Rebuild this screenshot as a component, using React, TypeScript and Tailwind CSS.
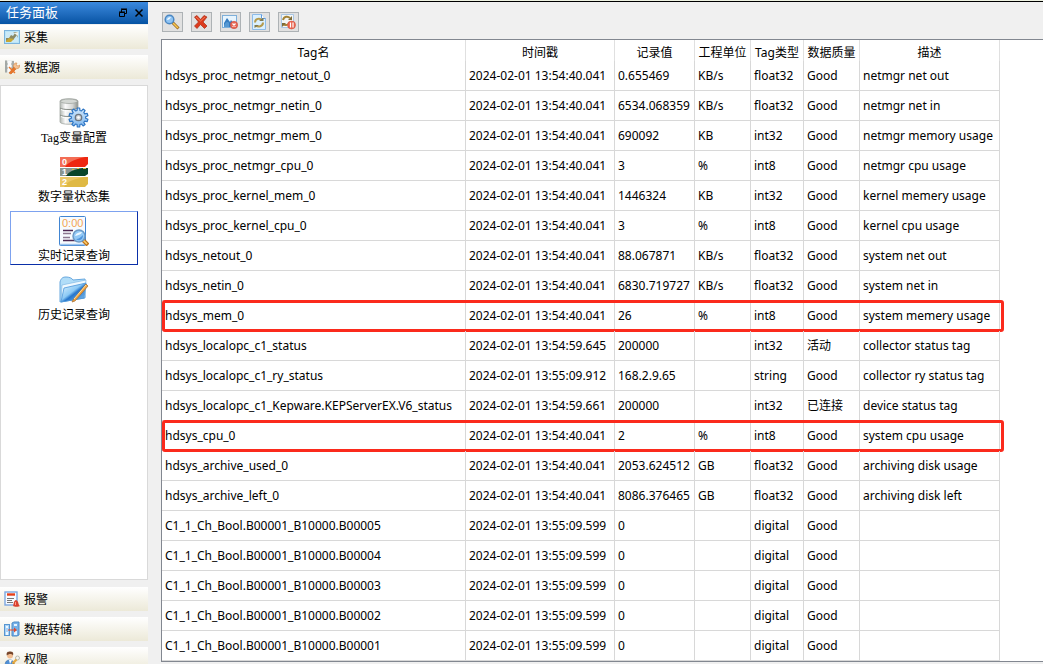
import type { ReactNode } from 'react';

type Row = [string, string, string, string, string, string, string];

const TIME = '2024-02-01 13:54:40.041';
const TIME_DIGITAL = '2024-02-01 13:55:09.599';

const rows: Row[] = [
  ['hdsys_proc_netmgr_netout_0', TIME, '0.655469', 'KB/s', 'float32', 'Good', 'netmgr net out'],
  ['hdsys_proc_netmgr_netin_0', TIME, '6534.068359', 'KB/s', 'float32', 'Good', 'netmgr net in'],
  ['hdsys_proc_netmgr_mem_0', TIME, '690092', 'KB', 'int32', 'Good', 'netmgr memory usage'],
  ['hdsys_proc_netmgr_cpu_0', TIME, '3', '%', 'int8', 'Good', 'netmgr cpu usage'],
  ['hdsys_proc_kernel_mem_0', TIME, '1446324', 'KB', 'int32', 'Good', 'kernel memery usage'],
  ['hdsys_proc_kernel_cpu_0', TIME, '3', '%', 'int8', 'Good', 'kernel cpu usage'],
  ['hdsys_netout_0', TIME, '88.067871', 'KB/s', 'float32', 'Good', 'system net out'],
  ['hdsys_netin_0', TIME, '6830.719727', 'KB/s', 'float32', 'Good', 'system net in'],
  ['hdsys_mem_0', TIME, '26', '%', 'int8', 'Good', 'system memery usage'],
  ['hdsys_localopc_c1_status', '2024-02-01 13:54:59.645', '200000', '', 'int32', '活动', 'collector status tag'],
  ['hdsys_localopc_c1_ry_status', '2024-02-01 13:55:09.912', '168.2.9.65', '', 'string', 'Good', 'collector ry status tag'],
  ['hdsys_localopc_c1_Kepware.KEPServerEX.V6_status', '2024-02-01 13:54:59.661', '200000', '', 'int32', '已连接', 'device status tag'],
  ['hdsys_cpu_0', TIME, '2', '%', 'int8', 'Good', 'system cpu usage'],
  ['hdsys_archive_used_0', TIME, '2053.624512', 'GB', 'float32', 'Good', 'archiving disk usage'],
  ['hdsys_archive_left_0', TIME, '8086.376465', 'GB', 'float32', 'Good', 'archiving disk left'],
  ['C1_1_Ch_Bool.B00001_B10000.B00005', TIME_DIGITAL, '0', '', 'digital', 'Good', ''],
  ['C1_1_Ch_Bool.B00001_B10000.B00004', TIME_DIGITAL, '0', '', 'digital', 'Good', ''],
  ['C1_1_Ch_Bool.B00001_B10000.B00003', TIME_DIGITAL, '0', '', 'digital', 'Good', ''],
  ['C1_1_Ch_Bool.B00001_B10000.B00002', TIME_DIGITAL, '0', '', 'digital', 'Good', ''],
  ['C1_1_Ch_Bool.B00001_B10000.B00001', TIME_DIGITAL, '0', '', 'digital', 'Good', ''],
];

const headers = ['Tag名', '时间戳', '记录值', '工程单位', 'Tag类型', '数据质量', '描述'];
const highlighted = new Set(['hdsys_mem_0', 'hdsys_cpu_0']);

function Icon16({ children }: { children: ReactNode }) {
  return (
    <svg width="16" height="16" viewBox="0 0 16 16" className="shrink-0" aria-hidden="true">
      {children}
    </svg>
  );
}

function Icon30({ children }: { children: ReactNode }) {
  return (
    <svg width="30" height="30" viewBox="0 0 30 30" className="shrink-0" aria-hidden="true">
      {children}
    </svg>
  );
}

// Outline of a gear: each tooth has two outer and two inner corners.
function gearPath(cx: number, cy: number, outer: number, inner: number, teeth: number) {
  const points: string[] = [];
  for (let tooth = 0; tooth < teeth; tooth++) {
    const corners: [number, number][] = [[-0.32, inner], [-0.2, outer], [0.2, outer], [0.32, inner]];
    for (const [shift, radius] of corners) {
      const angle = ((tooth + shift) * 2 * Math.PI) / teeth;
      points.push(`${(cx + radius * Math.sin(angle)).toFixed(2)} ${(cy - radius * Math.cos(angle)).toFixed(2)}`);
    }
  }
  return `M${points.join('L')}Z`;
}

const CollectIcon = () => (
  <Icon16>
    <rect x="0.5" y="1.5" width="15" height="13" fill="#b9e6fa" stroke="#7db4dc" />
    <rect x="2" y="3" width="12" height="10" fill="#cdeaf6" />
    <path d="M2 9h3l2-3 2 1 2-3-2-1h5v6l-1-3-4 5-3-1-2 2H2z" fill="#8b8a66" />
    <path d="M2 12l3-3 5 1-3 3H2z" fill="#c7a735" />
    <path d="M10 4l4-1v4z" fill="#f2f4ee" />
  </Icon16>
);

const SourceIcon = () => (
  <Icon16>
    <path d="M1 1.500h9v12H1z" fill="#e3e6e4" />
    <path d="M1 1.500h2v12H1z" fill="#a4a9a6" />
    <path d="M1 5h9M1 9h9" stroke="#a1a6a2" />
    <path d="M4 2h3v11H4z" fill="#fafafa" />
    <path d="M8 2h2v10H8z" fill="#a9adab" />
    <path d="M5 14l5-6 2 2-5 5z" fill="#e9772a" stroke="#c96218" strokeWidth="0.600" />
    <path d="M9 7l2-3 2 0-1 2 2 1 2-1-1 3-3 1z" fill="#f4c295" stroke="#d58a47" strokeWidth="0.600" />
    <path d="M5 8l6 6" stroke="#e9772a" strokeWidth="1.500" />
  </Icon16>
);

const AlarmIcon = () => (
  <Icon16>
    <rect x="1" y="1" width="12" height="13" fill="#f7fbff" stroke="#7da7e0" strokeWidth="1.4" />
    <path d="M3 3.5h8" stroke="#e64019" strokeWidth="2.4" />
    <path d="M3 7.5h7M3 9.5h5M3 11.5h6" stroke="#777" />
    <path d="M9 15c1-1 0-5 3-6 3 1 2 5 4 6-1 1-6 1-7 0z" fill="#d9422f" />
    <path d="M11.500 11v3" stroke="#ff9a85" />
  </Icon16>
);

const DumpIcon = () => (
  <Icon16>
    <rect x="0.5" y="3.5" width="5" height="11" fill="#a9d2f6" stroke="#5796d0" />
    <path d="M8 2l2-1h5v13l-2 1H8z" fill="#76b1e8" stroke="#4c8bc6" />
    <path d="M10 3h3v2h-3zM10 10h3v4h-3z" fill="#e4f3ff" />
    <path d="M2 5h2v2H2zM2 11h2v3H2z" fill="#eef8ff" />
    <path d="M4 8.500h6V6.500l3 2.500-3 2.500v-2H4z" fill="#df4a2c" />
  </Icon16>
);

const RightsIcon = () => (
  <Icon16>
    <path d="M1 15c0-5 2-6 5-6s4 2 4 6z" fill="#4f8fd5" stroke="#3b6ea8" strokeWidth="0.6" />
    <path d="M5 9l1 4 2-4z" fill="#fff" />
    <circle cx="6" cy="4.500" r="3" fill="#f2bd91" />
    <path d="M2.8 4.500C2 1 4 0.500 6 0.500s4 0.500 3 4C8 2.500 5 2.500 2.800 4.500z" fill="#76452a" />
    <circle cx="13.500" cy="7" r="2" fill="none" stroke="#b8b8b0" />
    <path d="M12.500 8.500l-4 4" stroke="#e5ab44" strokeWidth="2.4" />
    <path d="M9 12l3 2" stroke="#c98a27" />
  </Icon16>
);

const TagConfigIcon = () => (
  <Icon30>
    <defs>
      <linearGradient id="cyl" x1="0" x2="1">
        <stop offset="0" stopColor="#b3b8b3" />
        <stop offset="0.3" stopColor="#fbfbfb" />
        <stop offset="0.7" stopColor="#d4d6d4" />
        <stop offset="1" stopColor="#8b918c" />
      </linearGradient>
      <linearGradient id="gear" x1="0" y1="0" x2="0" y2="1">
        <stop offset="0" stopColor="#d3e9fc" />
        <stop offset="1" stopColor="#7db6ee" />
      </linearGradient>
    </defs>
    <path d="M1 3c0-3 18-3 18 0v21c0 3-18 3-18 0z" fill="url(#cyl)" stroke="#a3a8a3" strokeWidth="0.8" />
    <ellipse cx="10" cy="3.300" rx="8.500" ry="2.200" fill="#d4d8d4" stroke="#9ba19b" strokeWidth="0.7" />
    <path d="M1 10c2 2 16 2 18 0M1 17c2 2 16 2 18 0" fill="none" stroke="#868c86" />
    <path d="M2 11.500c3 2 14 2 16 0M2 18.500c3 2 14 2 16 0" fill="none" stroke="#fff" />
    <path d={gearPath(19.5, 19.5, 9.6, 7.2, 10)} fill="url(#gear)" stroke="#2f76c4" strokeWidth="1.200" strokeLinejoin="round" />
    <circle cx="19.500" cy="19.500" r="3.200" fill="#c9ced3" stroke="#6d7680" strokeWidth="1.300" />
    <circle cx="19.500" cy="19.500" r="1.300" fill="#fff" />
  </Icon30>
);

const StatusSetIcon = () => (
  <Icon30>
    <path d="M1 0h28v7l-3 3H1z" fill="#ee2710" />
    <path d="M1 0h25C18 2 10 4 6 10H1z" fill="#f36d55" />
    <path d="M1 11h28v6l-3 2H1z" fill="#08452a" />
    <path d="M1 11h23c-7 1-14 3-17 8H1z" fill="#8a9690" />
    <path d="M13 12.500h2M18 11.500h2M24 11.500h3" stroke="#d5be36" />
    <path d="M1 20h28v7l-3 3H1z" fill="#dfb944" />
    <path d="M1 20h24C17 22 9 23 5 30H1z" fill="#ebc865" />
    <g className="font-['Liberation_Sans'] font-bold" fill="#fff" fontSize="9">
      <text x="3" y="8">0</text>
      <text x="3" y="18">1</text>
      <text x="3" y="28">2</text>
    </g>
  </Icon30>
);

const RealtimeIcon = () => (
  <Icon30>
    <rect x="0.500" y="0.500" width="26" height="29" rx="1" fill="#f7fbff" stroke="#4185d2" />
    <path d="M1 28.500h25" stroke="#9ac3ee" strokeWidth="1.500" />
    <text x="3" y="10.500" fill="#f4a552" fontSize="11" className="font-['Liberation_Sans']">0:00</text>
    <path d="M4 14.500h10M4 24.500h13" stroke="#4d2852" strokeWidth="1.400" />
    <path d="M4 17.500h8M4 21.500h7" stroke="#8b7890" strokeWidth="1.400" />
    <path d="M24 24l5 5" stroke="#bd731d" strokeWidth="4" />
    <path d="M24 24l4 4" stroke="#ffd06b" strokeWidth="1.600" />
    <circle cx="20" cy="20" r="6" fill="#93c9f6" stroke="#6c9ac6" strokeWidth="1.500" />
    <path d="M16 20c1-3 4-4 7-4-1 3-4 3-7 4z" fill="#edf8ff" />
    <path d="M17 23c3 0 5-2 7-4 0 4-3 7-7 4z" fill="#4e94dd" />
  </Icon30>
);

const HistoryIcon = () => (
  <Icon30>
    <defs>
      <linearGradient id="folder" x1="0" y1="0" x2="1" y2="1">
        <stop offset="0" stopColor="#e9f8ff" />
        <stop offset="0.450" stopColor="#8bc9f5" />
        <stop offset="0.550" stopColor="#2776cb" />
        <stop offset="1" stopColor="#8fcbf5" />
      </linearGradient>
    </defs>
    <path d="M1 27V7c1-4 3-5 6-5 3 0 6 1 7 3l12-1v19z" fill="#b1ddf8" stroke="#68a8df" />
    <path d="M3 10l24-5-1 17-24 5z" fill="#eff9ff" stroke="#75b0df" strokeWidth="0.600" />
    <path d="M2 27l3-14 22-5-2 15z" fill="url(#folder)" stroke="#4b96d9" strokeWidth="0.800" />
    <path d="M14 25L27 9l2 2-13 15-3 1z" fill="#f3a33e" stroke="#a46b31" strokeWidth="0.700" />
    <path d="M15 24L27 10" stroke="#ffe2a2" />
  </Icon30>
);

const SearchIcon = () => (
  <Icon16>
    <path d="M8.500 8.500l6 6" stroke="#98631a" strokeWidth="3" />
    <path d="M9 9l5 5" stroke="#f9c953" strokeWidth="1.600" />
    <circle cx="5.500" cy="5.500" r="4.300" fill="#8fc4f4" stroke="#4b87c2" strokeWidth="1.500" />
    <path d="M3 6c0-2 2-3 4-3-1 2-2 3-4 3z" fill="#f0faff" />
  </Icon16>
);

const DeleteIcon = () => (
  <Icon16>
    <path d="M1.500 3L4 1.500l3.500 4L11 1.500 14 3l-4 5 4 4-2.500 2.500L7.500 10.500 4 14.500 1.500 12l4-4z" fill="#dc3b1d" stroke="#a92b16" strokeWidth="0.700" />
    <path d="M3 3l4.500 4L12 3" fill="none" stroke="#f37a57" />
  </Icon16>
);

const ClearPictureIcon = () => (
  <Icon16>
    <rect x="0.500" y="1.500" width="14" height="12" fill="#e7f4fd" stroke="#7eafd9" />
    <path d="M2 13V9l3-5 3 4 1-2 3 4v3z" fill="#347cc0" />
    <path d="M2 12c1-4 4-5 5-3v4H2z" fill="#5498d3" />
    <circle cx="12" cy="11" r="3.700" fill="#e66552" stroke="#ce4f40" strokeWidth="0.600" />
    <path d="M10.500 9.500l3 3M13.500 9.500l-3 3" stroke="#fff" strokeWidth="1.300" />
  </Icon16>
);

const RefreshIcon = () => (
  <Icon16>
    <path d="M1.500 0.500h9l4 4v11h-13z" fill="#daf0ff" stroke="#8dbbe8" />
    <path d="M10.500 0.500v4h4" fill="#fff" stroke="#5f9be0" />
    <path d="M4 8.500c0-4 5-5 7-2M12 8.500c0 4-5 5-7 3" fill="none" stroke="#b59a4c" strokeWidth="2" />
    <path d="M8 7h4.500V3.500zM8 11H3.500v3z" fill="#7f7a52" />
  </Icon16>
);

const PauseIcon = () => (
  <Icon16>
    <path d="M1.500 0.500h12v13h-12z" fill="#f4f6f5" stroke="#a9c6e4" />
    <path d="M3 6c1-4 5-4 7-2M10 8c-1 3-5 4-7 2" fill="none" stroke="#a28236" strokeWidth="2" />
    <path d="M8 6h4V2zM6 9H2v4z" fill="#7e6b37" />
    <circle cx="11.500" cy="11" r="4" fill="#e96450" stroke="#d6503c" strokeWidth="0.600" />
    <path d="M10.500 8.500v5M13 8.500v5" stroke="#fff" strokeWidth="1.200" />
  </Icon16>
);

function Section({ icon, label }: { icon: ReactNode; label: string }) {
  return (
    <button className="flex h-6 shrink-0 items-center gap-1 bg-linear-to-b from-white to-[#ece9d8] pl-1 text-left leading-3">
      {icon}
      <span className="pt-0.5">{label}</span>
    </button>
  );
}

function PanelItem({ icon, label, selected = false }: { icon: ReactNode; label: ReactNode; selected?: boolean }) {
  return (
    <button
      className={
        selected
          ? 'flex h-[54px] shrink-0 flex-col items-center border border-t-[#7da2ef] border-r-[#0a2fa8] border-b-[#0a2fa8] border-l-[#7da2ef] pt-1'
          : 'flex h-[54px] shrink-0 flex-col items-center border border-transparent pt-1'
      }
    >
      {icon}
      <span className="leading-5">{label}</span>
    </button>
  );
}

const tools = [
  { label: '查询', icon: <SearchIcon /> },
  { label: '删除', icon: <DeleteIcon /> },
  { label: '清空', icon: <ClearPictureIcon /> },
  { label: '刷新', icon: <RefreshIcon /> },
  { label: '暂停', icon: <PauseIcon /> },
];

export default function App() {
  return (
    <div className="flex h-screen flex-col overflow-hidden bg-[#f0f0f0] text-black">
      <div className="h-[2px] shrink-0 border-b border-black bg-[#eef2e2]" />
      <div className="flex min-h-0 flex-1">
        <aside className="flex w-[148px] shrink-0 flex-col gap-1.5 overflow-hidden font-['Liberation_Serif','Noto_Sans_CJK_SC',sans-serif] text-xs">
          <div className="-mb-[5px] flex h-[22px] shrink-0 items-center bg-linear-to-b from-[#3a8ade] to-[#0453a3] pr-1 pl-1.5">
            <h1 className="flex-1 text-[13px] leading-4 text-white">任务面板</h1>
            <button aria-label="还原" className="mr-1.5">
              <svg width="10" height="10" viewBox="0 0 10 10" fill="none" stroke="#000" aria-hidden="true">
                <path d="M3.500 4V1.500h5v4H6M3 1h6" />
                <path d="M1.500 4.500h5v4h-5zM1 4h6" />
              </svg>
            </button>
            <button aria-label="关闭">
              <svg width="10" height="10" viewBox="0 0 10 10" stroke="#000" strokeWidth="1.500" aria-hidden="true">
                <path d="M1.500 1.500l7 7M8.500 1.500l-7 7" />
              </svg>
            </button>
          </div>
          <Section icon={<CollectIcon />} label="采集" />
          <Section icon={<SourceIcon />} label="数据源" />
          <nav className="mb-px flex min-h-0 flex-1 flex-col gap-[5px] border border-[#d9d9d9] bg-white px-[9px] pt-[7px]">
            <PanelItem icon={<TagConfigIcon />} label="Tag变量配置" />
            <PanelItem icon={<StatusSetIcon />} label="数字量状态集" />
            <PanelItem icon={<RealtimeIcon />} label="实时记录查询" selected />
            <PanelItem icon={<HistoryIcon />} label="历史记录查询" />
          </nav>
          <Section icon={<AlarmIcon />} label="报警" />
          <Section icon={<DumpIcon />} label="数据转储" />
          <div className="-mb-[7px] flex shrink-0 flex-col">
            <Section icon={<RightsIcon />} label="权限" />
          </div>
        </aside>

        <main className="flex min-w-0 flex-1 flex-col pb-[2px] pl-[13px] font-['Noto_Sans','Noto_Sans_CJK_SC',sans-serif] text-xs">
          <div className="flex shrink-0 gap-2 pt-[10px] pb-[7px] pl-px">
            {tools.map((tool) => (
              <button
                key={tool.label}
                aria-label={tool.label}
                className="flex h-5 w-[21px] items-center border border-[#adb2b5] bg-[#e1e1e1] pl-px"
              >
                {tool.icon}
              </button>
            ))}
          </div>
          <div className="min-h-0 flex-1 overflow-hidden border-y border-l border-[#828790] bg-white">
            <table className="w-[838px] table-fixed border-separate border-spacing-0 whitespace-nowrap">
              <colgroup>
                <col className="w-[304px]" />
                <col className="w-[149px]" />
                <col className="w-[80px]" />
                <col className="w-[56px]" />
                <col className="w-[53px]" />
                <col className="w-[56px]" />
                <col className="w-[140px]" />
              </colgroup>
              <thead>
                <tr className="h-[21px]">
                  {headers.map((header) => (
                    <th key={header} className="border-r border-[#e0e0e0] p-0 pt-1 text-center leading-4 font-normal">
                      {header}
                    </th>
                  ))}
                </tr>
              </thead>
              <tbody>
                {rows.map((row) => (
                  <tr key={row[0]} className="relative h-[30px]">
                    {row.map((cell, column) => (
                      <td key={column} className="border-r border-b border-[#d8d8d8] p-0 pl-[3px] leading-4">
                        {cell}
                        {column === 0 && highlighted.has(row[0]) && (
                          <span className="pointer-events-none absolute -top-px -right-[4px] -bottom-px left-0 rounded-[3px] border-3 border-[#fb2a1c]" />
                        )}
                      </td>
                    ))}
                  </tr>
                ))}
              </tbody>
            </table>
          </div>
        </main>
      </div>
    </div>
  );
}
